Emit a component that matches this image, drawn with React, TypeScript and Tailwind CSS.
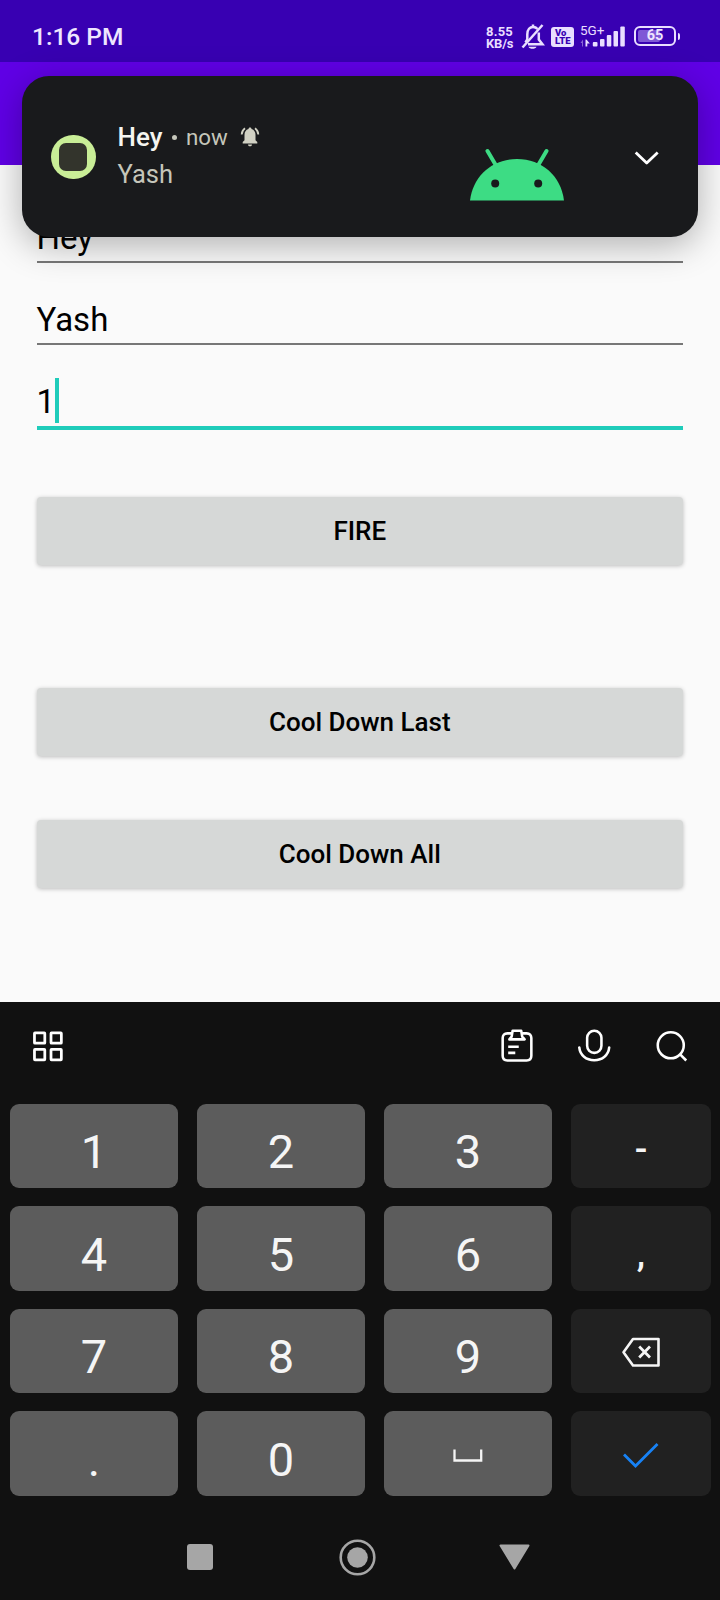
import type { ReactNode } from 'react';

function BellOffIcon() {
  return (
    <svg width="24" height="28" viewBox="0 0 24 28" fill="none" stroke="#e9deff" strokeWidth="2.500">
      <path d="M1.500 24.500 L21.500 2" />
      <path d="M4.500 19.500 L6.300 16.500 V11.500 C6.300 6.500 9 4 12 4 C14 4 15.500 4.800 16.500 6" />
      <path d="M17.800 9.500 V16.500 L21.500 21.300 H7" />
      <path d="M7.500 23.800 H15.500 C14.500 26.500 8.500 26.500 7.500 23.800Z" fill="#e9deff" stroke="none" />
      <path d="M12 1.500 V4" />
    </svg>
  );
}

function SignalIcon() {
  return (
    <svg width="46" height="22" viewBox="0 0 46 22" fill="#e9deff">
      <path d="M0.500 18 L3 14.500 V21.500 H2 V18Z" opacity="0.45" />
      <path d="M5.500 14.500 H6.500 L9.800 18.500 H7.300 V21.500 H5.500Z" />
      <rect x="12.800" y="17" width="4.700" height="4.500" rx="1" />
      <rect x="20" y="14" width="4.500" height="7.500" rx="1" />
      <rect x="26.800" y="10" width="4.500" height="11.500" rx="1" />
      <rect x="33.500" y="6" width="4.500" height="15.500" rx="1" />
      <rect x="40.300" y="1.500" width="4.500" height="20" rx="1" />
    </svg>
  );
}

function StatusBar() {
  return (
    <header className="flex h-[62px] items-start bg-[#3800b2] pl-8 text-[#eee6ff]">
      <span className="mt-[22px] w-[454px] text-[24.500px] leading-[30px] font-medium">1:16 PM</span>
      <div className="mt-[26px] w-[35px] text-[13px] leading-[12px] font-bold tracking-[0.200px] text-[#e9deff]">
        <div>8.55</div>
        <div className="tracking-[-0.200px]">KB/s</div>
      </div>
      <div className="mt-[23px] w-[30px]">
        <BellOffIcon />
      </div>
      <div className="mt-[26.500px] h-[20px] w-[23px] rounded-[3px] bg-[#e9deff] pt-[2px] pl-[4px] text-[9.500px] leading-[8px] font-black text-[#3800b2]">
        <div>Vo</div>
        <div>LTE</div>
      </div>
      <div className="relative mt-[25px] ml-[6px] w-[54px] text-[#e9deff]">
        <SignalIcon />
        <span className="absolute top-[-2px] left-0 text-[13.500px] leading-[14px]">5G+</span>
      </div>
      <div className="mt-[26px] flex items-center">
        <div className="relative flex h-[20px] w-[42px] items-center justify-center rounded-[6px] border-2 border-[#e9deff]">
          <div className="absolute top-[2px] left-[2px] h-[12px] w-[22px] rounded-[2px] bg-[#7f58d6]" />
          <span className="relative text-[14.500px] leading-[16px] font-bold">65</span>
        </div>
        <div className="ml-[1.500px] h-[7px] w-[2.500px] rounded-r-[2px] bg-[#e9deff]" />
      </div>
    </header>
  );
}

function RingingBell() {
  return (
    <svg width="20" height="20" viewBox="0 0 20 20" fill="#d1d1c3">
      <path d="M10 0.500 C11 0.500 11.500 1.200 11.500 2.100 C14.200 2.900 15.500 5 15.500 8 V13.200 L17.300 15 V16.500 H2.700 V15 L4.500 13.200 V8 C4.500 5 5.800 2.900 8.500 2.100 C8.500 1.200 9 0.500 10 0.500Z" />
      <path d="M8 17.500 H12 C12 18.800 11 19.300 10 19.300 C9 19.300 8 18.800 8 17.500Z" />
      <path d="M1.700 7.500 C1.800 4.800 3 2.800 5 1.300 M18.300 7.500 C18.200 4.800 17 2.800 15 1.300" fill="none" stroke="#d1d1c3" strokeWidth="1.800" />
    </svg>
  );
}

function AndroidHead() {
  return (
    <svg width="94" height="54" viewBox="0 0 94 54">
      <path d="M0 53.500 C3 29 22 12 47 12 C72 12 91 29 94 53.500Z" fill="#3ddc84" />
      <path d="M17.500 4 L26 18.500 M76.500 4 L68 18.500" stroke="#3ddc84" strokeWidth="4" strokeLinecap="round" />
      <circle cx="25.200" cy="36.500" r="4" fill="#191a1c" />
      <circle cx="68.200" cy="36.500" r="4" fill="#191a1c" />
    </svg>
  );
}

function Notification() {
  return (
    <section className="absolute top-[76px] left-[22px] flex h-[161px] w-[676px] rounded-[27px] bg-[#191a1c] shadow-[0_8px_36px_rgba(0,0,0,0.3)]">
      <div className="mt-[58.500px] ml-[29px] flex size-[44.500px] items-center justify-center rounded-full bg-[#c9ee97]">
        <div className="size-[28px] rounded-[7px] bg-[#33342c]" />
      </div>
      <div className="mt-[45px] ml-[22px] w-[330px]">
        <div className="flex h-[32px] items-center text-[#c5c6ba]">
          <span className="text-[26px] font-medium text-[#f5f5f0]">Hey</span>
          <span className="ml-[9.500px] size-[5px] rounded-full bg-[#c5c6ba]" />
          <span className="ml-[9px] pt-[1px] text-[22.300px]">now</span>
          <span className="ml-[12px] pb-[1px]">
            <RingingBell />
          </span>
        </div>
        <div className="mt-[5px] text-[25.500px] leading-[32px] text-[#c5c6ba]">Yash</div>
      </div>
      <div className="mt-[71px] ml-[22px] w-[94px]">
        <AndroidHead />
      </div>
      <svg className="mt-[74px] ml-[70px]" width="26" height="18" viewBox="0 0 26 18" fill="none" stroke="#fff" strokeWidth="2.800" strokeLinejoin="round">
        <path d="M1.700 2.500 L12.700 13 L23.700 2.500" />
      </svg>
    </section>
  );
}

function Field({ value, className }: { value: string; className: string }) {
  return <div className={`border-[#777] border-b-2 text-[33px] text-black ${className}`}>{value}</div>;
}

function ActionButton({ label, className }: { label: string; className: string }) {
  return (
    <button className={`block h-[68px] w-full rounded-[4px] bg-[#d6d8d7] text-[26px] font-medium text-black shadow-[0_1px_4px_rgba(0,0,0,0.25)] ${className}`}>
      {label}
    </button>
  );
}

function Key({ children, dark, shift = true }: { children: ReactNode; dark?: boolean; shift?: boolean }) {
  return (
    <div
      className={`flex h-[84.500px] items-center justify-center rounded-[9px] text-[#f5f5f5] ${
        dark ? 'bg-[#212121] text-[37px] font-medium' : 'bg-[#5c5c5c] text-[47px]'
      } ${shift ? 'pt-[13px]' : ''}`}
    >
      {children}
    </div>
  );
}

function Toolbar() {
  return (
    <div className="flex items-start px-[32px] pt-[26px]">
      <svg width="32" height="36" viewBox="0 0 32 36" fill="none" stroke="#fff" strokeWidth="2.800">
        <rect x="2.500" y="4.700" width="10.500" height="10.500" rx="0.500" />
        <rect x="19.300" y="4.700" width="10.500" height="10.500" rx="0.500" />
        <rect x="2.500" y="21.500" width="10.500" height="10.500" rx="0.500" />
        <rect x="19.300" y="21.500" width="10.500" height="10.500" rx="0.500" />
      </svg>
      <svg className="ml-[437px]" width="34" height="36" viewBox="0 0 34 36" fill="none" stroke="#fff" strokeWidth="2.600">
        <path d="M11 5.200 H6.500 Q1.700 5.200 1.700 10 V28 Q1.700 32.700 6.500 32.700 H26 Q30.800 32.700 30.800 28 V10 Q30.800 5.200 26 5.200 H21.500" />
        <path d="M11.800 2.500 H20.500 L21.500 8.500 L24 11.300 H8.500 L10.800 8.500Z" strokeLinejoin="round" />
        <path d="M7.300 18.800 H18 M7.300 25 H14.500" />
      </svg>
      <svg className="ml-[43px]" width="34" height="36" viewBox="0 0 34 36" fill="none" stroke="#fff" strokeWidth="2.600" strokeLinecap="round">
        <rect x="10.300" y="2.500" width="14.500" height="22.500" rx="7.200" />
        <path d="M2.300 19.500 C3.100 27.500 9.300 32.500 17.500 32.500 C25.700 32.500 31.900 27.500 32.700 19.500" />
      </svg>
      <svg className="ml-[44px]" width="34" height="36" viewBox="0 0 34 36" fill="none" stroke="#fff" strokeWidth="2.600">
        <circle cx="16" cy="17.300" r="13.200" />
        <path d="M25 26 L31.700 32.700" />
      </svg>
    </div>
  );
}

function Keyboard() {
  return (
    <section className="h-[598px] bg-[#111]">
      <Toolbar />
      <div className="mt-[39.500px] ml-[10px] grid grid-cols-[168px_168px_168px_140px] gap-x-[19px] gap-y-[18px]">
        <Key>1</Key>
        <Key>2</Key>
        <Key>3</Key>
        <Key dark shift={false}>
          <span className="pt-[8px]">-</span>
        </Key>
        <Key>4</Key>
        <Key>5</Key>
        <Key>6</Key>
        <Key dark shift={false}>
          <span className="pt-[10px]">,</span>
        </Key>
        <Key>7</Key>
        <Key>8</Key>
        <Key>9</Key>
        <Key dark shift={false}>
          <svg className="mt-[3px]" width="40" height="32" viewBox="0 0 40 32" fill="none" stroke="#f5f5f5" strokeWidth="2.600" strokeLinejoin="round">
            <path d="M12 3 H37.500 V29.500 H12 L2.500 16.200Z" />
            <path d="M18.200 10.500 L29 21.500 M29 10.500 L18.200 21.500" strokeWidth="2.800" />
          </svg>
        </Key>
        <Key>.</Key>
        <Key>0</Key>
        <Key shift={false}>
          <svg className="mt-[4px]" width="30" height="13" viewBox="0 0 30 13" fill="none" stroke="#f5f5f5" strokeWidth="2.300">
            <path d="M1.500 0.500 V11.500 H28.200 V0.500" />
          </svg>
        </Key>
        <Key dark shift={false}>
          <svg className="mt-[5px]" width="36" height="28" viewBox="0 0 36 28" fill="none" stroke="#1782f5" strokeWidth="2.800">
            <path d="M1 12.500 L12.500 24 L34.500 2" />
          </svg>
        </Key>
      </div>
      <nav className="mt-[43px] flex h-[37px] items-center pl-[187px]">
        <div className="size-[26px] rounded-[3px] bg-[#a6a6a6]" />
        <svg className="ml-[126px]" width="37" height="37" viewBox="0 0 37 37">
          <circle cx="18.500" cy="18.500" r="16.800" fill="none" stroke="#a6a6a6" strokeWidth="2.600" />
          <circle cx="18.500" cy="18.500" r="10.300" fill="#a6a6a6" />
        </svg>
        <svg className="ml-[122.500px]" width="31" height="26" viewBox="0 0 31 26">
          <path d="M1.500 1.500 H29.500 L15.500 24.500Z" fill="#a6a6a6" stroke="#a6a6a6" strokeWidth="2" strokeLinejoin="round" />
        </svg>
      </nav>
    </section>
  );
}

export default function App() {
  return (
    <div className="relative h-[1600px] w-[720px] overflow-hidden bg-[#fafafa] font-[Roboto,sans-serif]">
      <StatusBar />
      <div className="h-[103px] bg-[#6000e6]" />
      <main className="h-[837px] pr-[37px] pl-[36.500px] pt-[48px]">
        <Field value="Hey" className="h-[50px] leading-[49px]" />
        <Field value="Yash" className="mt-[33px] h-[49px] leading-[47px]" />
        <div className="mt-[32px] flex h-[53px] items-start border-b-4 border-[#1fccba] text-[33px] leading-[47px] text-black">
          <span className="mt-px">1</span>
          <span className="mt-px h-[45px] w-[3.500px] bg-[#1fccba]" />
        </div>
        <ActionButton label="FIRE" className="mt-[67px]" />
        <ActionButton label="Cool Down Last" className="mt-[123px]" />
        <ActionButton label="Cool Down All" className="mt-[64px]" />
      </main>
      <Keyboard />
      <Notification />
    </div>
  );
}
